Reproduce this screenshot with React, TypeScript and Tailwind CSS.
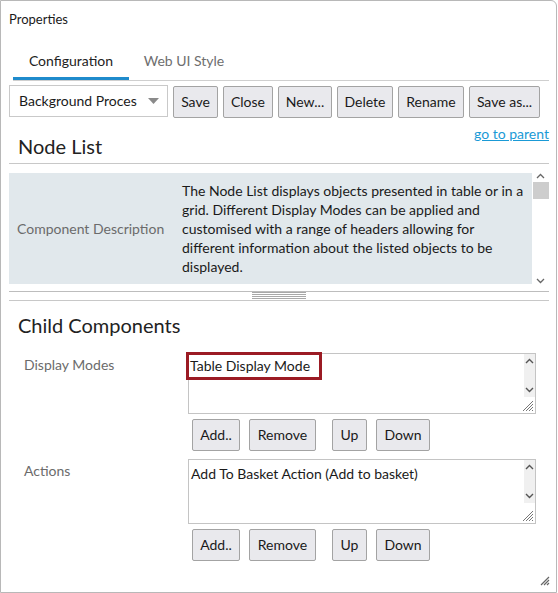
import React from "react";

const font = { fontFamily: '"Segoe UI", Lato, "Liberation Sans", sans-serif' };

function Btn({ label, w }: { label: string; w: string }) {
  return (
    <button
      className={`h-[32px] ${w} shrink-0 rounded-[2px] border border-[#a3a3a3] bg-[#e9e9ed] text-[14px] text-[#1a1a1a] leading-none`}
    >
      {label}
    </button>
  );
}

function ListBox({ children, h }: { children: React.ReactNode; h: string }) {
  return (
    <div className={`relative ${h} w-[348px] border border-[#c4c4c4] bg-white`}>
      <div className="pl-[2px] pt-[3px] text-[14px] text-[#1a1a1a]">{children}</div>
      {/* scrollbar */}
      <div className="absolute right-0 top-0 flex h-[43px] w-[11px] flex-col items-center justify-between bg-[#f0f0f0] py-[4px]">
        <svg width="9" height="6" viewBox="0 0 9 6">
          <path d="M1 5 L4.5 1.5 L8 5" stroke="#555" strokeWidth="1.4" fill="none" />
        </svg>
        <svg width="9" height="6" viewBox="0 0 9 6">
          <path d="M1 1 L4.5 4.5 L8 1" stroke="#555" strokeWidth="1.4" fill="none" />
        </svg>
      </div>
      <svg className="absolute bottom-[1px] right-[1px]" width="14" height="14" viewBox="0 0 14 14">
        <path d="M13 3 L3 13 M13 6 L6 13 M13 9 L9 13 M13 12 L12 13" stroke="#777" strokeWidth="1" />
      </svg>
    </div>
  );
}

function ButtonRow() {
  return (
    <div className="ml-[4px] mt-[5px] flex">
      <Btn label="Add.." w="w-[48px]" />
      <div className="ml-[9px]">
        <Btn label="Remove" w="w-[67px]" />
      </div>
      <div className="ml-[16px]">
        <Btn label="Up" w="w-[35px]" />
      </div>
      <div className="ml-[9px]">
        <Btn label="Down" w="w-[54px]" />
      </div>
    </div>
  );
}

export default function App() {
  return (
    <div className="h-[593px] w-[558px] bg-white" style={font}>
      <div className="relative h-[593px] w-[557px] rounded-tr-[6px] border border-[#b8b8b8] bg-white">
        <div className="pl-[8px] pt-[9px] text-[13px] text-[#1a1a1a]">Properties</div>

        {/* tabs */}
        <div className="ml-[12px] mr-[7px] mt-[18px] flex h-[33px] border-b border-[#cfcfcf]">
          <div className="flex w-[116px] items-start justify-center border-b-[3px] border-[#1f8bcc] pt-[2px] text-[14px] text-[#222]">
            Configuration
          </div>
          <div className="flex w-[110px] items-start justify-center pt-[2px] text-[14px] text-[#6e6e6e]">
            Web UI Style
          </div>
        </div>

        {/* toolbar */}
        <div className="ml-[8px] mt-[4px] flex items-start">
          <div className="mr-[5px] flex h-[32px] w-[159px] items-center justify-between border border-[#c9c9c9] bg-white pl-[9px] pr-[8px] text-[14px] text-[#1a1a1a]">
            <span>Background Proces</span>
            <svg width="11" height="6" viewBox="0 0 11 6">
              <path d="M0 0 H11 L5.5 6 Z" fill="#8a8a8a" />
            </svg>
          </div>
          <div className="mt-[1px] flex gap-[5px]">
            <Btn label="Save" w="w-[45px]" />
            <Btn label="Close" w="w-[50px]" />
            <Btn label="New..." w="w-[54px]" />
            <Btn label="Delete" w="w-[56px]" />
            <Btn label="Rename" w="w-[66px]" />
            <Btn label="Save as..." w="w-[71px]" />
          </div>
        </div>

        {/* node list */}
        <div className="ml-[8px] mr-[7px]">
          <div className="mt-[-1px] flex justify-end pt-[8px]">
            <span className="text-[14px] leading-[18px] text-[#1a9ad6] underline">go to parent</span>
          </div>
          <div className="mt-[-9px] pl-[9px] text-[20px] leading-[24px] text-[#222]">Node List</div>
          <div className="mt-[5px] border-t border-[#c8c8c8]" />
          <div className="mt-[9px] flex h-[111px]">
            <div className="flex flex-1 items-center bg-[#e1e8ec]">
              <div className="w-[173px] shrink-0 pl-[8px] text-[14px] text-[#6b6b6b]">Component Description</div>
              <div className="pr-[8px] text-[14px] leading-[19px] text-[#1a1a1a]">
                The Node List displays objects presented in table or in a grid. Different Display Modes can be applied and
                customised with a range of headers allowing for different information about the listed objects to be
                displayed.
              </div>
            </div>
            <div className="relative w-[17px] bg-white">
              <svg className="absolute left-[4px] top-[0px]" width="9" height="6" viewBox="0 0 9 6">
                <path d="M1 5 L4.5 1.5 L8 5" stroke="#666" strokeWidth="1.3" fill="none" />
              </svg>
              <div className="absolute left-[1px] top-[9px] h-[17px] w-[16px] bg-[#cdcdcd]" />
              <svg className="absolute bottom-[0px] left-[4px]" width="9" height="6" viewBox="0 0 9 6">
                <path d="M1 1 L4.5 4.5 L8 1" stroke="#666" strokeWidth="1.3" fill="none" />
              </svg>
            </div>
          </div>
          {/* splitter */}
          <div className="mt-[7px] border-t border-[#bdbdbd]" />
          <div className="flex flex-col items-center gap-[1px]">
            <div className="h-px w-[54px] bg-[#a8a8a8]" />
            <div className="h-px w-[54px] bg-[#a8a8a8]" />
            <div className="h-px w-[54px] bg-[#a8a8a8]" />
            <div className="h-px w-[54px] bg-[#a8a8a8]" />
          </div>
          <div className="mt-[1px] border-t border-[#c8c8c8]" />

          {/* child components */}
          <div className="pl-[9px] pt-[12px] text-[20px] leading-[24px] text-[#222]">Child Components</div>

          <div className="mt-[16px] flex">
            <div className="w-[179px] shrink-0 pl-[15px] pt-[1px] text-[14px] text-[#6b6b6b]">Display Modes</div>
            <div>
              <div className="relative">
                <ListBox h="h-[61px]">
                  <span className="invisible">Table Display Mode</span>
                </ListBox>
                <div className="absolute left-[-2px] top-[-1px] h-[28px] w-[136px] border-[3px] border-[#9b1b24] pl-[1px] pt-[1px] text-[14px] leading-[19px] text-[#1a1a1a]">
                  Table Display Mode
                </div>
              </div>
              <ButtonRow />
            </div>
          </div>

          <div className="mt-[8px] flex">
            <div className="w-[179px] shrink-0 pl-[15px] pt-[1px] text-[14px] text-[#6b6b6b]">Actions</div>
            <div>
              <ListBox h="h-[65px]">Add To Basket Action (Add to basket)</ListBox>
              <ButtonRow />
            </div>
          </div>
        </div>

        {/* window resize grip */}
        <svg className="absolute bottom-[6px] right-[6px]" width="11" height="11" viewBox="0 0 11 11">
          <path d="M10 2 L2 10 M10 5 L5 10 M10 8 L8 10" stroke="#666" strokeWidth="1.2" />
        </svg>
      </div>
    </div>
  );
}
